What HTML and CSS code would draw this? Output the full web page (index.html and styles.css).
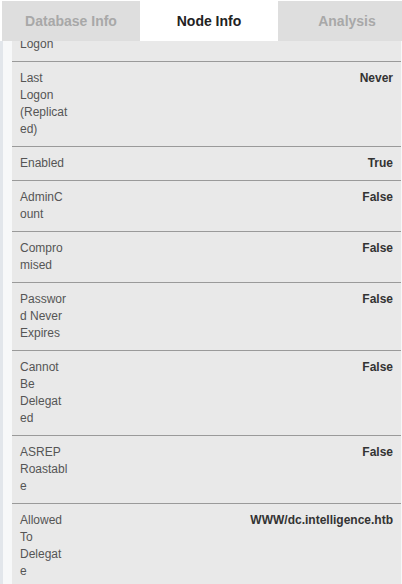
FILE: index.html
```html
<!DOCTYPE html>
<html>
<head>
<meta charset="utf-8">
<link rel="stylesheet" href="styles.css">
</head>
<body>
<div class="page">
  <div class="edge"></div>
  <div class="main">
    <div class="tabs">
      <div class="tab">Database Info</div>
      <div class="tab active">Node Info</div>
      <div class="tab">Analysis</div>
    </div>
    <div class="body">
      <div class="gutter"></div>
      <div class="panel">
        <div class="list">
          <div class="row"><div class="label">Last Logon</div><div class="value">Never</div></div>
          <div class="row"><div class="label">Last Logon (Replicated)</div><div class="value">Never</div></div>
          <div class="row"><div class="label">Enabled</div><div class="value">True</div></div>
          <div class="row"><div class="label">AdminCount</div><div class="value">False</div></div>
          <div class="row"><div class="label">Compromised</div><div class="value">False</div></div>
          <div class="row"><div class="label">Password Never Expires</div><div class="value">False</div></div>
          <div class="row"><div class="label">Cannot Be Delegated</div><div class="value">False</div></div>
          <div class="row"><div class="label">ASREP Roastable</div><div class="value">False</div></div>
          <div class="row"><div class="label">Allowed To Delegate</div><div class="value">WWW/dc.intelligence.htb</div></div>
        </div>
      </div>
    </div>
  </div>
</div>
</body>
</html>
```
FILE: styles.css
```css
html, body {
  margin: 0;
  padding: 0;
  background: #ffffff;
  font-family: "Liberation Sans", Arial, Helvetica, sans-serif;
}
.page {
  width: 402px;
  height: 584px;
  overflow: hidden;
  display: flex;
}
.edge {
  width: 3px;
  flex: none;
  margin-top: 41px;
  background: #e2e6eb;
}
.main {
  flex: 1;
  display: flex;
  flex-direction: column;
  min-width: 0;
  background: #f7f8f9;
}
.tabs {
  display: flex;
  margin-left: -1px;
  padding-top: 1px;
  background: #ffffff;
  flex: none;
}
.tab {
  width: 138px;
  flex: none;
  height: 40px;
  display: flex;
  align-items: center;
  justify-content: center;
  background: #dedede;
  color: #a8a8a8;
  font-weight: bold;
  font-size: 14px;
}
.tab.active {
  background: #ffffff;
  color: #222222;
}
.body {
  flex: 1;
  display: flex;
  min-height: 0;
}
.gutter {
  width: 9px;
  flex: none;
  background: #f7f8f9;
}
.panel {
  width: 389px;
  flex: none;
  background: #e9e9e9;
  overflow: hidden;
}
.list {
  margin-top: -30px;
}
.row {
  display: flex;
  padding: 8px;
  border-bottom: 1px solid #9a9a9a;
  font-size: 12px;
  line-height: 17px;
}
.label {
  width: 47.5px;
  flex: none;
  overflow-wrap: anywhere;
  color: #555555;
}
.value {
  flex: 1;
  text-align: right;
  font-weight: bold;
  color: #333333;
}
```
